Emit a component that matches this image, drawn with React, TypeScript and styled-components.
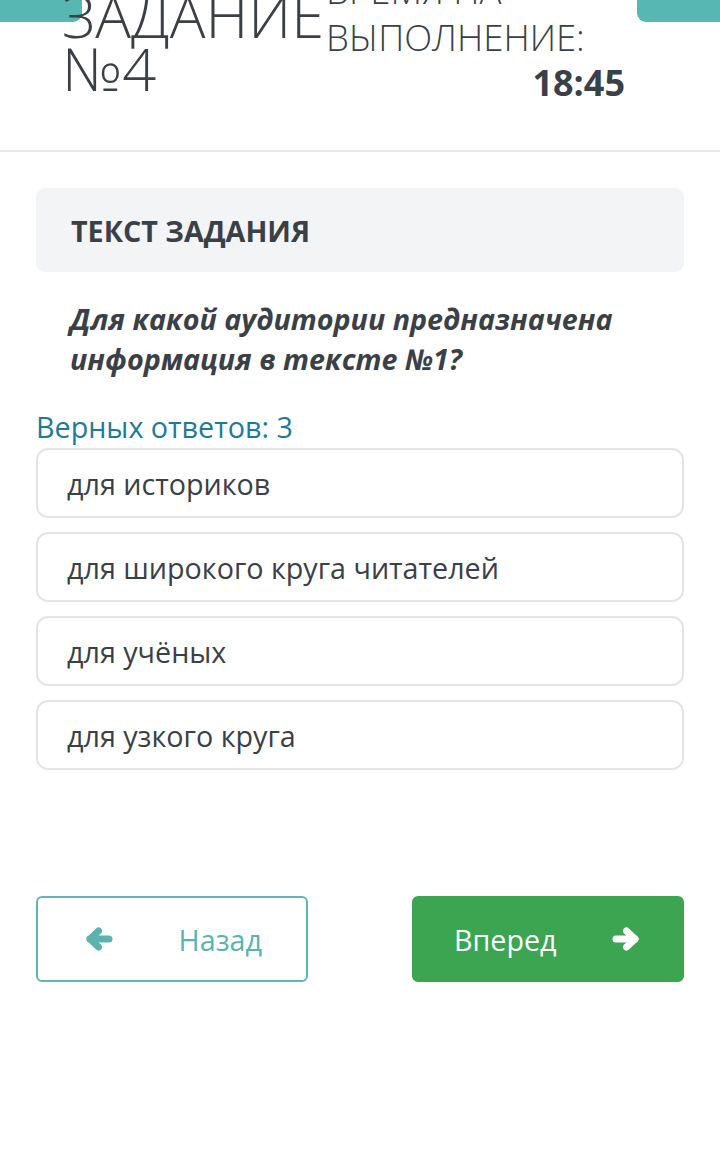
import React from "react";
import styled, { createGlobalStyle } from "styled-components";

const GlobalStyle = createGlobalStyle`
  html, body { margin: 0; padding: 0; background: #ffffff; }
  body { font-family: "Open Sans", "Noto Sans", sans-serif; color: #3b3f46; }
  * { box-sizing: border-box; }
`;

const Page = styled.div`
  position: relative;
  width: 720px;
  min-height: 1167px;
  overflow: hidden;
`;

const Tab = styled.div<{ $side: "left" | "right" }>`
  position: absolute;
  top: 0;
  ${(p) => (p.$side === "left" ? "left: 0;" : "right: 0;")}
  width: ${(p) => (p.$side === "left" ? "82px" : "83px")};
  height: 22px;
  background: #56b8b1;
  border-radius: ${(p) => (p.$side === "left" ? "0 0 9px 0" : "0 0 0 9px")};
`;

const Header = styled.header`
  position: relative;
  height: 152px;
  display: flex;
  padding-left: 62px;
  border-bottom: 2px solid #e6e6e6;
`;

const Title = styled.h1`
  position: relative;
  margin: -12px 0 0 0;
  flex: 0 0 264px;
  font-size: 59.5px;
  line-height: 53px;
  font-weight: 300;
  color: #3b3f46;
  white-space: nowrap;
`;

const Timer = styled.div`
  position: relative;
  display: flex;
  flex-direction: column;
  width: 299px;
  margin-top: -33px;
`;

const TimerLabel = styled.div`
  font-size: 36.5px;
  line-height: 47px;
  font-weight: 300;
  color: #3b3f46;
  white-space: nowrap;
`;

const TimerValue = styled.div`
  font-size: 36px;
  line-height: 44px;
  font-weight: 700;
  text-align: right;
  color: #3b3f46;
`;

const Main = styled.main`
  padding: 36px 36px 0;
  display: flex;
  flex-direction: column;
`;

const SectionBox = styled.div`
  height: 84px;
  background: #f3f4f6;
  border-radius: 9px;
  display: flex;
  align-items: center;
  padding-left: 35px;
  font-size: 28.7px;
  font-weight: 700;
  color: #3b3f46;
`;

const Question = styled.p`
  margin: 27px 0 0;
  padding-left: 34px;
  font-size: 28.7px;
  line-height: 40px;
  font-weight: 700;
  font-style: italic;
  color: #3b3f46;
`;

const Hint = styled.div`
  margin-top: 31px;
  font-size: 28.7px;
  line-height: 34px;
  color: #1f7a99;
`;

const Options = styled.div`
  margin-top: 4px;
  display: flex;
  flex-direction: column;
  gap: 14px;
`;

const Option = styled.div`
  height: 70px;
  border: 2px solid #e3e4e6;
  border-radius: 12px;
  display: flex;
  align-items: center;
  padding-left: 29px;
  font-size: 28.7px;
  color: #3b3f46;
`;

const Nav = styled.div`
  margin-top: 126px;
  display: flex;
  justify-content: space-between;
`;

const NavButton = styled.button<{ $primary?: boolean }>`
  width: 272px;
  height: 86px;
  border-radius: 6px;
  border: 2px solid ${(p) => (p.$primary ? "#3ba552" : "#5cb8b2")};
  background: ${(p) => (p.$primary ? "#3ba552" : "#ffffff")};
  color: ${(p) => (p.$primary ? "#ffffff" : "#5cb3ae")};
  font-family: "Open Sans", "Noto Sans", sans-serif;
  font-size: 28.7px;
  display: flex;
  align-items: center;
  justify-content: space-between;
  padding: ${(p) => (p.$primary ? "0 42px 0 40px" : "0 44px 0 47px")};
  cursor: pointer;
`;

const ArrowSvg = styled.svg`
  width: 28px;
  height: 24px;
  flex: none;
`;

function Arrow({ dir }: { dir: "left" | "right" }) {
  return (
    <ArrowSvg viewBox="0 0 28 24" aria-hidden="true">
      <g
        transform={dir === "right" ? "translate(28 0) scale(-1 1)" : undefined}
        fill="none"
        stroke="currentColor"
        strokeWidth={7}
        strokeLinecap="round"
        strokeLinejoin="round"
      >
        <path d="M5 12 H24" />
        <path d="M13.5 4 L5 12 L13.5 20" />
      </g>
    </ArrowSvg>
  );
}

export default function App() {
  return (
    <Page>
      <GlobalStyle />
      <Tab $side="left" />
      <Tab $side="right" />
      <Header>
        <Title>
          ЗАДАНИЕ
          <br />
          №4
        </Title>
        <Timer>
          <TimerLabel>
            ВРЕМЯ НА
            <br />
            ВЫПОЛНЕНИЕ:
          </TimerLabel>
          <TimerValue>18:45</TimerValue>
        </Timer>
      </Header>
      <Main>
        <SectionBox>ТЕКСТ ЗАДАНИЯ</SectionBox>
        <Question>Для какой аудитории предназначена информация в тексте №1?</Question>
        <Hint>Верных ответов: 3</Hint>
        <Options>
          <Option>для историков</Option>
          <Option>для широкого круга читателей</Option>
          <Option>для учёных</Option>
          <Option>для узкого круга</Option>
        </Options>
        <Nav>
          <NavButton>
            <Arrow dir="left" />
            Назад
          </NavButton>
          <NavButton $primary>
            Вперед
            <Arrow dir="right" />
          </NavButton>
        </Nav>
      </Main>
    </Page>
  );
}
